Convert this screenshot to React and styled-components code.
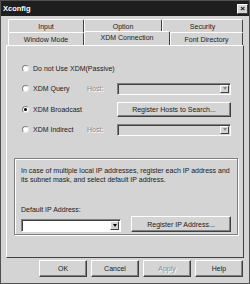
import React from 'react'
import styled, { createGlobalStyle, css } from 'styled-components'

const GlobalStyle = createGlobalStyle`
    html, body { margin: 0; padding: 0; background: #d4d4d4; }
    * { box-sizing: border-box; }
`

const raised = css`
    border-top: 1px solid #ffffff;
    border-left: 1px solid #ffffff;
    border-right: 1px solid #404040;
    border-bottom: 1px solid #404040;
`

const sunken = css`
    border-top: 1px solid #808080;
    border-left: 1px solid #808080;
    border-right: 1px solid #ffffff;
    border-bottom: 1px solid #ffffff;
    box-shadow: inset 1px 1px 0 #404040;
`

const Window = styled.div`
    width: 250px;
    height: 284px;
    background: #d4d4d4;
    border: 1px solid #505050;
    font-family: "Liberation Sans", Arial, sans-serif;
    font-size: 7px;
    color: #1a1a1a;
    display: flex;
    flex-direction: column;
`

const TitleBar = styled.div`
    height: 15px;
    background: #1e1e1e;
    color: #fff;
    font-weight: bold;
    font-size: 7.5px;
    display: flex;
    align-items: center;
    justify-content: space-between;
    padding: 0 1px 0 2px;
`

const CloseBox = styled.div`
    width: 11px;
    height: 10px;
    background: #d4d4d4;
    ${raised}
    color: #000;
    font-size: 8px;
    line-height: 7px;
    text-align: center;
    font-weight: bold;
`

const Body = styled.div`
    flex: 1;
    padding: 3px 5px 0 5px;
    display: flex;
    flex-direction: column;
`

const TabRow = styled.div`
    display: flex;
    padding-left: 2px;
    height: 13px;
    position: relative;
    z-index: ${p => (p.$front ? 2 : 1)};
`

const Tab = styled.div`
    width: ${p => p.$w}px;
    height: ${p => (p.$active ? 14 : 13)}px;
    margin-top: ${p => (p.$active ? -1 : 0)}px;
    background: #d4d4d4;
    border-top: 1px solid #ffffff;
    border-left: 1px solid #ffffff;
    border-right: 1px solid #404040;
    border-radius: 2px 2px 0 0;
    display: flex;
    align-items: center;
    justify-content: center;
    padding-bottom: ${p => (p.$active ? 2 : 0)}px;
    white-space: nowrap;
`

const Panel = styled.div`
    height: 213px;
    ${raised}
    display: flex;
    flex-direction: column;
    padding: 12px 6px 0 6px;
`

const OptionRow = styled.div`
    height: 20.5px;
    display: grid;
    grid-template-columns: 74px 30px 114px;
    align-items: center;
`

const RadioLabel = styled.label`
    display: flex;
    align-items: center;
    gap: 4px;
    padding-left: 9px;
    white-space: nowrap;
    grid-column: ${p => (p.$wide ? '1 / 4' : 'auto')};
`

const Radio = styled.span`
    flex: 0 0 auto;
    width: 7px;
    height: 7px;
    border-radius: 50%;
    background: #fff;
    border: 1px solid #808080;
    border-right-color: #e8e8e8;
    border-bottom-color: #e8e8e8;
    display: flex;
    align-items: center;
    justify-content: center;
    &::after {
        content: '';
        width: 3px;
        height: 3px;
        border-radius: 50%;
        background: #000;
        display: ${p => (p.$checked ? 'block' : 'none')};
    }
`

const HostLabel = styled.span`
    color: #8a8a8a;
    text-shadow: 1px 1px 0 #fff;
`

const Combo = styled.div`
    width: ${p => p.$w}px;
    height: ${p => p.$h || 12}px;
    margin-top: ${p => p.$offset || 0}px;
    ${sunken}
    background: ${p => (p.$disabled ? '#d4d4d4' : '#fff')};
    display: flex;
    justify-content: flex-end;
    padding: 1px;
`

const ComboButton = styled.div`
    width: 9px;
    background: #d4d4d4;
    ${raised}
    display: flex;
    align-items: center;
    justify-content: center;
    &::after {
        content: '';
        border-left: 2.5px solid transparent;
        border-right: 2.5px solid transparent;
        border-top: 3px solid ${p => (p.$disabled ? '#8a8a8a' : '#000')};
    }
`

const Button = styled.div`
    width: ${p => p.$w}px;
    height: ${p => p.$h || 15}px;
    background: #d4d4d4;
    ${raised}
    box-shadow: inset -1px -1px 0 #808080;
    display: flex;
    align-items: center;
    justify-content: center;
    color: ${p => (p.$disabled ? '#8a8a8a' : '#1a1a1a')};
    text-shadow: ${p => (p.$disabled ? '1px 1px 0 #fff' : 'none')};
    white-space: nowrap;
    grid-column: ${p => p.$col || 'auto'};
`

const GroupBox = styled.div`
    margin: 18px 0 0 1px;
    width: 224px;
    height: 77px;
    border: 1px solid #808080;
    box-shadow: 1px 1px 0 #fff, inset 1px 1px 0 #fff;
    padding: 7px 6px 0 6px;
    display: flex;
    flex-direction: column;
`

const Note = styled.p`
    margin: 0;
    line-height: 9px;
`

const FieldLabel = styled.div`
    margin-top: 22px;
`

const FieldRow = styled.div`
    margin-top: 3px;
    display: flex;
    align-items: flex-start;
    justify-content: space-between;
`

const Footer = styled.div`
    display: flex;
    justify-content: flex-end;
    gap: 4px;
    padding: 2px 1px 0 0;
`

const tabsBack = [
    { label: 'Input', w: 76 },
    { label: 'Option', w: 78 },
    { label: 'Security', w: 81 },
]

const tabsFront = [
    { label: 'Window Mode', w: 76 },
    { label: 'XDM Connection', w: 86, active: true },
    { label: 'Font Directory', w: 73 },
]

export default function App() {
    return (
        <>
            <GlobalStyle />
            <Window>
                <TitleBar>
                    <span>Xconfig</span>
                    <CloseBox>×</CloseBox>
                </TitleBar>
                <Body>
                    <TabRow>
                        {tabsBack.map(t => (
                            <Tab key={t.label} $w={t.w}>{t.label}</Tab>
                        ))}
                    </TabRow>
                    <TabRow $front>
                        {tabsFront.map(t => (
                            <Tab key={t.label} $w={t.w} $active={t.active}>{t.label}</Tab>
                        ))}
                    </TabRow>
                    <Panel>
                        <OptionRow>
                            <RadioLabel $wide><Radio />Do not Use XDM(Passive)</RadioLabel>
                        </OptionRow>
                        <OptionRow>
                            <RadioLabel><Radio />XDM Query</RadioLabel>
                            <HostLabel>Host:</HostLabel>
                            <Combo $w={114} $disabled><ComboButton $disabled /></Combo>
                        </OptionRow>
                        <OptionRow>
                            <RadioLabel><Radio $checked />XDM Broadcast</RadioLabel>
                            <Button $w={114} $h={15} $col="3">Register Hosts to Search...</Button>
                        </OptionRow>
                        <OptionRow>
                            <RadioLabel><Radio />XDM Indirect</RadioLabel>
                            <HostLabel>Host:</HostLabel>
                            <Combo $w={114} $disabled><ComboButton $disabled /></Combo>
                        </OptionRow>
                        <GroupBox>
                            <Note>
                                In case of multiple local IP addresses, register each IP address and
                                <br />
                                its subnet mask, and select default IP address.
                            </Note>
                            <FieldLabel>Default IP Address:</FieldLabel>
                            <FieldRow>
                                <Combo $w={100} $h={13} $offset={3}><ComboButton /></Combo>
                                <Button $w={100} $h={16}>Register IP Address...</Button>
                            </FieldRow>
                        </GroupBox>
                    </Panel>
                    <Footer>
                        <Button $w={48} $h={17}>OK</Button>
                        <Button $w={48} $h={17}>Cancel</Button>
                        <Button $w={48} $h={17} $disabled>Apply</Button>
                        <Button $w={48} $h={17}>Help</Button>
                    </Footer>
                </Body>
            </Window>
        </>
    )
}
